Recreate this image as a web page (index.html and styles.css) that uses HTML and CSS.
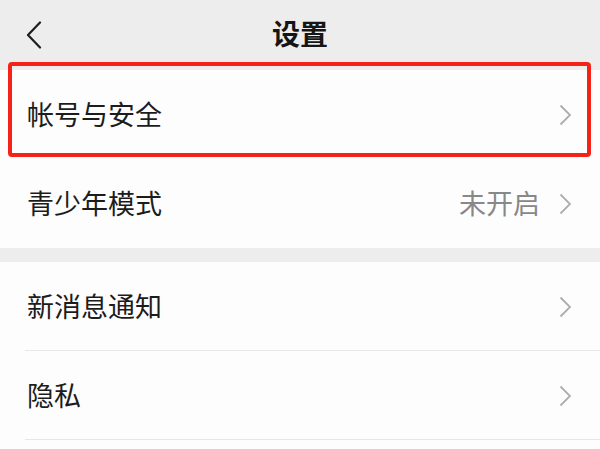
FILE: index.html
```html
<!DOCTYPE html>
<html lang="zh-CN">
<head>
<meta charset="utf-8">
<title>设置</title>
<link rel="stylesheet" href="styles.css">
</head>
<body>
<div class="page">
  <header class="nav">
    <svg class="back" width="16" height="28" viewBox="0 0 16 28"><path d="M14 1.5 L2 14 L14 26.5" fill="none" stroke="#1e1e1e" stroke-width="2.2" stroke-linecap="round" stroke-linejoin="round"/></svg>
    <h1 class="title">设置</h1>
    <span></span>
  </header>
  <section class="group">
    <div class="row">
      <span class="label">帐号与安全</span>
      <span class="right"><svg class="chev" width="13" height="22" viewBox="0 0 13 22"><path d="M1.5 1.5 L11 11 L1.5 20.5" fill="none" stroke="#adadad" stroke-width="1.8"/></svg></span>
    </div>
    <div class="row">
      <span class="label">青少年模式</span>
      <span class="right"><span class="value">未开启</span><svg class="chev" width="13" height="22" viewBox="0 0 13 22"><path d="M1.5 1.5 L11 11 L1.5 20.5" fill="none" stroke="#adadad" stroke-width="1.8"/></svg></span>
    </div>
  </section>
  <section class="group">
    <div class="row sep">
      <span class="label">新消息通知</span>
      <span class="right"><svg class="chev" width="13" height="22" viewBox="0 0 13 22"><path d="M1.5 1.5 L11 11 L1.5 20.5" fill="none" stroke="#adadad" stroke-width="1.8"/></svg></span>
    </div>
    <div class="row sep">
      <span class="label">隐私</span>
      <span class="right"><svg class="chev" width="13" height="22" viewBox="0 0 13 22"><path d="M1.5 1.5 L11 11 L1.5 20.5" fill="none" stroke="#adadad" stroke-width="1.8"/></svg></span>
    </div>
  </section>
  <div class="highlight"></div>
</div>
</body>
</html>
```
FILE: styles.css
```css
* { box-sizing: border-box; }
html, body { margin: 0; padding: 0; }
body {
  width: 600px;
  height: 449px;
  overflow: hidden;
  background: #ededed;
  font-family: "Noto Sans CJK SC", "Noto Sans", sans-serif;
  color: #1c1c1c;
}
.page { position: relative; width: 600px; height: 449px; background: #fdfdfd; }
.nav {
  height: 70px;
  background: #ededed;
  display: grid;
  grid-template-columns: 1fr auto 1fr;
  align-items: center;
  padding: 0 26px;
}
.back { display: block; }
.title {
  margin: 0;
  font-size: 28px;
  font-weight: 700;
  line-height: 1;
  color: #151515;
  padding-bottom: 4px;
}
.group { background: #fdfdfd; }
.group:first-of-type { border-bottom: 14px solid #ededed; }
.row {
  position: relative;
  height: 89px;
  display: flex;
  align-items: center;
  justify-content: space-between;
  padding: 0 28px 0 27px;
}
.row.sep::after {
  content: "";
  position: absolute;
  left: 25px;
  right: 0;
  bottom: 0;
  height: 1px;
  background: #e7e7e7;
}
.label { font-size: 27px; line-height: 1; padding-bottom: 2px; }
.right { display: flex; align-items: center; gap: 19px; }
.value { font-size: 27px; line-height: 1; color: #888; padding-bottom: 2px; }
.chev { display: block; }
.highlight {
  position: absolute;
  left: 8px;
  top: 62px;
  width: 583px;
  height: 95px;
  border: 4px solid #f52317;
  border-radius: 4px;
}
```
